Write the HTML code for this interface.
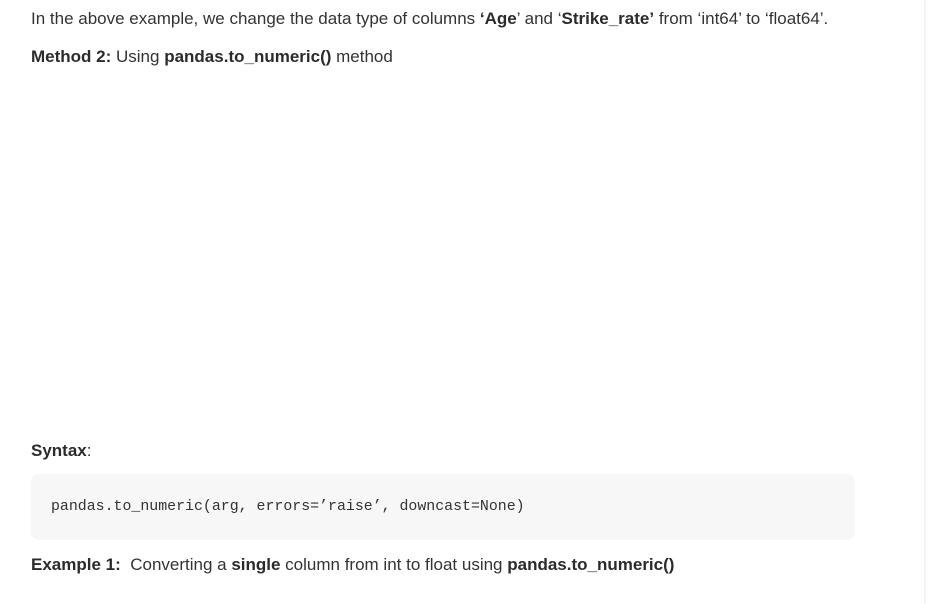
<!DOCTYPE html>
<html><head><meta charset="utf-8"><style>
html,body{margin:0;padding:0;background:#fff;width:928px;height:604px;overflow:hidden;position:relative}
body{font-family:"Liberation Sans",sans-serif;color:#333;font-size:17px}
.t{position:absolute;left:31px;white-space:nowrap;line-height:20px}
b{font-weight:bold;color:#2b2b2b}
.code{position:absolute;left:31px;top:474px;width:824px;height:66px;background:#f7f7f7;border-radius:8px}
.code span{position:absolute;left:20px;top:23px;font-family:"Liberation Mono",monospace;font-size:14.9px;color:#333;white-space:nowrap;line-height:20px}
.edge{position:absolute;left:924px;top:0;width:2px;height:604px;background:#f4f4f4}
</style></head><body>
<div class="t" style="top:9px">In the above example, we change the data type of columns <b>‘Age</b>’ and ‘<b>Strike_rate’</b> from ‘int64’ to ‘float64’.</div>
<div class="t" style="top:47px"><b>Method 2:</b> Using <b>pandas.to_numeric()</b> method</div>
<div class="t" style="top:441px"><b>Syntax</b>:</div>
<div class="code"><span>pandas.to_numeric(arg, errors=’raise’, downcast=None)</span></div>
<div class="t" style="top:555px"><b>Example 1:</b>&nbsp; Converting a <b>single</b> column from int to float using <b>pandas.to_numeric()</b></div>
<div class="edge"></div>
</body></html>
